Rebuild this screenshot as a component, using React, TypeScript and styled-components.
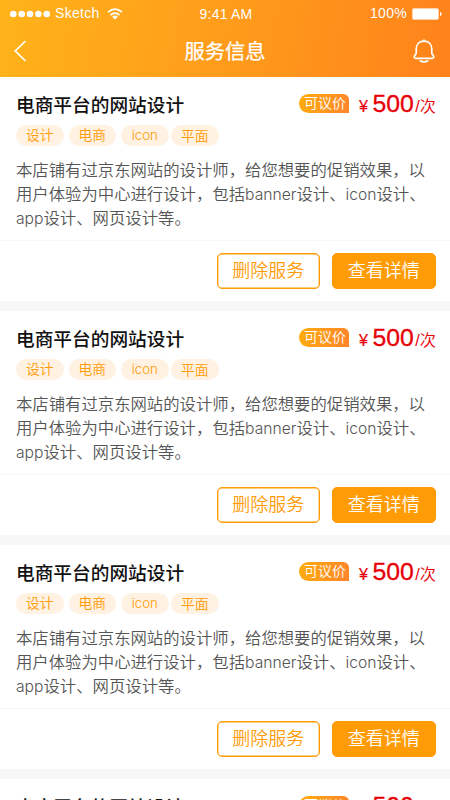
import React from 'react';
import styled, { createGlobalStyle, css } from 'styled-components';

const GlobalStyle = createGlobalStyle`
  * { box-sizing: border-box; }
  html, body { margin: 0; height: 800px; overflow: hidden; }
  body {
    background: #f7f7f7;
    font-family: "Liberation Sans", "Noto Sans CJK SC", sans-serif;
  }
`;

const Screen = styled.div`
  width: 450px;
  height: 800px;
  overflow: hidden;
  background: #f7f7f7;
`;

const Header = styled.header`
  height: 77px;
  color: #fff;
  background: linear-gradient(100deg, #ffb319 0%, #ff9c1b 50%, #ff821b 100%);
`;

const StatusBar = styled.div`
  display: grid;
  grid-template-columns: 1fr auto 1fr;
  align-items: center;
  height: 25px;
  padding: 0 8px 0 10px;
  line-height: 25px;
`;

const StatusGroup = styled.div<{ $end?: boolean }>`
  display: flex;
  align-items: center;
  justify-content: ${p => (p.$end ? 'flex-end' : 'flex-start')};
`;

const Carrier = styled.span`
  margin: 0 7px 0 5px;
  font-size: 14px;
  letter-spacing: 0.3px;
`;

const Clock = styled.span`
  font-size: 14px;
  letter-spacing: 0.2px;
  padding-top: 2px;
`;

const Percent = styled.span`
  margin-right: 5px;
  font-size: 14px;
  letter-spacing: 0.3px;
`;

const NavBar = styled.div`
  display: grid;
  grid-template-columns: 1fr auto 1fr;
  align-items: center;
  height: 52px;
  padding: 0 15px 0 14px;
`;

const NavTitle = styled.h1`
  margin: 2px 0 0 1px;
  font-size: 20.3px;
  font-weight: 400;
  line-height: 50px;
  -webkit-text-stroke: 0.25px #fff;
`;

const BellButton = styled.span`
  display: flex;
  justify-content: flex-end;
`;

const BackButton = styled.span`
  display: flex;
`;

const Card = styled.article`
  height: 224px;
  margin-bottom: 10px;
  background: #fff;
`;

const CardBody = styled.div`
  height: 164px;
  padding: 15px 14px 0 16px;
  border-bottom: 1px solid #f7f7f7;
`;

const CardHead = styled.div`
  display: flex;
  justify-content: space-between;
  height: 26px;
`;

const Name = styled.h2`
  margin: 1px 0 0;
  color: #111;
  font-size: 18.7px;
  font-weight: 500;
  line-height: 25px;
`;

const PriceGroup = styled.div`
  display: flex;
  align-items: flex-start;
`;

const Negotiable = styled.span`
  width: 50px;
  height: 19px;
  margin: 2px 9.5px 0 0;
  border-radius: 10px 6px 0 10px;
  background: linear-gradient(100deg, #ffad0e, #ff842b);
  color: #fff;
  font-size: 14px;
  font-weight: 350;
  line-height: 18px;
  padding-left: 5px;
  white-space: nowrap;
`;

const Price = styled.span`
  display: flex;
  align-items: baseline;
  height: 26px;
  margin-top: -1px;
  color: #e80008;
  font-size: 16.2px;
  font-weight: 350;
  line-height: 25px;
`;

const Amount = styled.span`
  margin: 0 1.5px 0 4px;
  font-size: 24.8px;
  -webkit-text-stroke: 0.3px #e80008;
`;

const Currency = styled.span`
  width: 10px;
  font-size: 16px;
  text-align: center;
  -webkit-text-stroke: 0.2px #e80008;
`;

const Tags = styled.div`
  display: flex;
  margin-top: 7px;
`;

const Tag = styled.span`
  width: 47.5px;
  height: 21px;
  margin-right: 5px;
  border-radius: 11px;
  background: #fff2e2;
  color: #ff9b05;
  font-size: 13.8px;
  font-weight: 350;
  line-height: 21px;
  text-align: center;
  &:last-child { line-height: 23px; margin-left: -2.5px; }
`;

const Latin = styled.span`
  font-family: Inter, sans-serif;
  font-size: 0.96em;
  font-weight: 300;
  line-height: 1;
`;

const Description = styled.p`
  margin: 12px 0 0;
  color: #555;
  font-size: 16.36px;
  font-weight: 350;
  line-height: 24px;
  white-space: nowrap;
`;

const Actions = styled.div`
  display: flex;
  justify-content: flex-end;
  gap: 12px;
  padding: 12px 14.5px 0 0;
`;

const Button = styled.button<{ $primary?: boolean }>`
  width: 103.5px;
  height: 36px;
  padding: 1px 0 0;
  border: 1px solid #ff9b05;
  border-radius: 5px;
  box-shadow: inset 0 0 0 0.4px #ff9b05;
  background: #fff;
  color: #ff9b05;
  font-family: inherit;
  font-size: 18px;
  font-weight: 350;
  line-height: 33px;
  ${p => p.$primary && css`
    background: #ff9b05;
    color: #fff;
  `}
`;

const Signal = () => (
  <svg width="40" height="8" viewBox="0 0 40 8" fill="#fff">
    {[3.3, 11.7, 20, 28.4, 36.7].map(x => <circle key={x} cx={x} cy="4" r="3.3" />)}
  </svg>
);

const Wifi = () => (
  <svg width="16" height="12" viewBox="0 0 16 12" fill="none" stroke="#fff" strokeWidth="1.7">
    <path d="M1 4.2Q8-1.8 15 4.2M3.5 7Q8 3.2 12.5 7" />
    <path d="M5.2 8.7Q8 6.5 10.8 8.7L8 11.5Z" fill="#fff" stroke="none" />
  </svg>
);

const Battery = () => (
  <svg width="30" height="12" viewBox="0 0 30 12">
    <rect x="0.5" y="0.5" width="26" height="11" rx="1.5" fill="#fff" stroke="#ffd3a6" />
    <path d="M28 4Q29.6 4.2 29.6 6T28 8Z" fill="#fff" />
  </svg>
);

const Back = () => (
  <svg width="13" height="22" viewBox="0 0 13 22" fill="none" stroke="#fff" strokeWidth="1.7">
    <path d="M11.5 1L1.2 11L11.5 21" />
  </svg>
);

const Bell = () => (
  <svg width="22" height="24" viewBox="0 0 22 24" fill="none" stroke="#fff" strokeWidth="1.7" strokeLinecap="round" strokeLinejoin="round">
    <path d="M11 1V2M11 2.2C6.3 2.2 3.2 5.3 3.2 9.8V14.6C2.8 16 1.2 16.2 1.2 18C1.2 18.9 1.8 19.3 2.7 19.3H19.3C20.2 19.3 20.8 18.9 20.8 18C20.8 16.2 19.2 16 18.8 14.6V9.8C18.8 5.3 15.7 2.2 11 2.2Z" />
    <path d="M7.2 21.8Q11 24 14.8 21.8" />
  </svg>
);

const tags = ['设计', '电商', 'icon', '平面'];
const lines = [
  '本店铺有过京东网站的设计师，给您想要的促销效果，以',
  '用户体验为中心进行设计，包括banner设计、icon设计、',
  'app设计、网页设计等。',
];

const MixedText = ({ text }: { text: string }) => (
  <>
    {text.split(/([a-z]+)/).map((part, i) => (i % 2 ? <Latin key={i}>{part}</Latin> : part))}
  </>
);

const ServiceCard = () => (
  <Card>
    <CardBody>
      <CardHead>
        <Name>电商平台的网站设计</Name>
        <PriceGroup>
          <Negotiable>可议价</Negotiable>
          <Price><Currency>¥</Currency><Amount>500</Amount>/次</Price>
        </PriceGroup>
      </CardHead>
      <Tags>{tags.map(t => <Tag key={t}><MixedText text={t} /></Tag>)}</Tags>
      <Description>
        {lines.map(l => <React.Fragment key={l}><MixedText text={l} /><br /></React.Fragment>)}
      </Description>
    </CardBody>
    <Actions>
      <Button>删除服务</Button>
      <Button $primary>查看详情</Button>
    </Actions>
  </Card>
);

export default function App() {
  return (
    <Screen>
      <GlobalStyle />
      <Header>
        <StatusBar>
          <StatusGroup><Signal /><Carrier>Sketch</Carrier><Wifi /></StatusGroup>
          <Clock>9:41 AM</Clock>
          <StatusGroup $end><Percent>100%</Percent><Battery /></StatusGroup>
        </StatusBar>
        <NavBar>
          <BackButton><Back /></BackButton>
          <NavTitle>服务信息</NavTitle>
          <BellButton><Bell /></BellButton>
        </NavBar>
      </Header>
      {[0, 1, 2, 3].map(i => <ServiceCard key={i} />)}
    </Screen>
  );
}
